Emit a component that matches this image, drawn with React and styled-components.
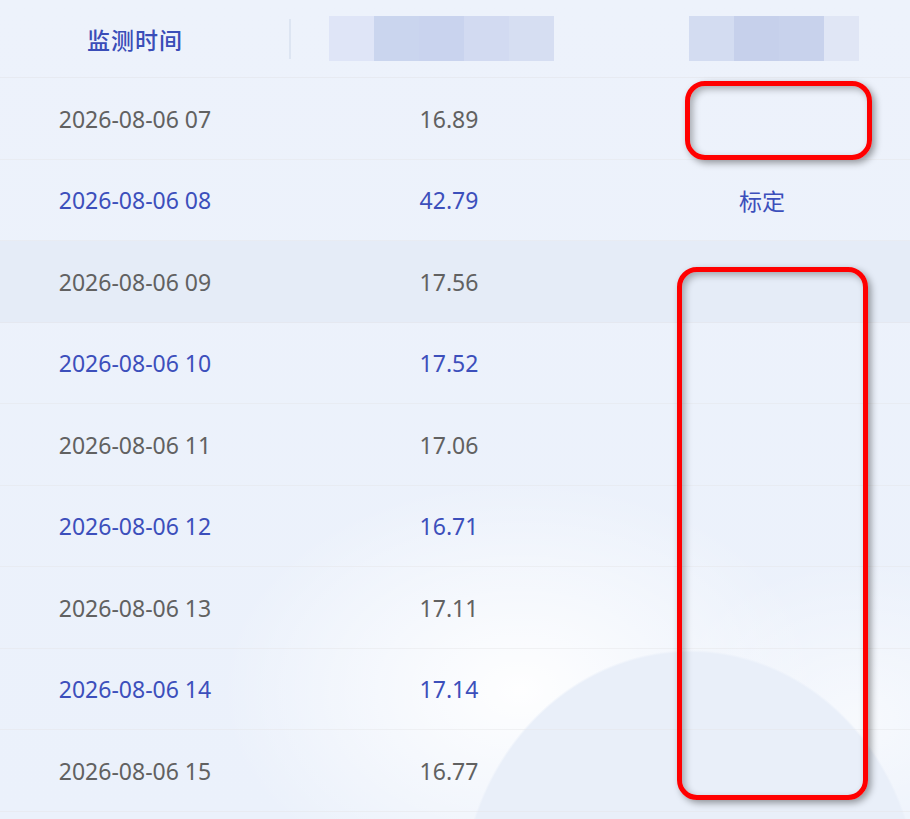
import React from 'react';
import styled, { createGlobalStyle } from 'styled-components';

const GlobalStyle = createGlobalStyle`
  html, body {
    margin: 0;
    padding: 0;
    background: #ebf1fb;
  }
  * {
    box-sizing: border-box;
  }
`;

const Page = styled.div`
  position: relative;
  width: 910px;
  height: 819px;
  overflow: hidden;
  font-family: "Noto Sans", "Noto Sans CJK SC", sans-serif;
  background:
    radial-gradient(ellipse 230px 255px at 690px 905px, #e9eff9 99%, rgba(233, 239, 249, 0) 100%),
    radial-gradient(ellipse 300px 210px at 520px 690px, rgba(255, 255, 255, 0.95), rgba(255, 255, 255, 0) 100%),
    radial-gradient(ellipse 200px 160px at 860px 720px, rgba(255, 255, 255, 0.6), rgba(255, 255, 255, 0) 100%),
    linear-gradient(180deg, #edf2fb 0%, #ebf1fb 100%);
`;

const Columns = `
  display: grid;
  grid-template-columns: 270px 358px 268px 1fr;
`;

const HeaderRow = styled.div`
  ${Columns}
  height: 78px;
  border-bottom: 1px solid rgba(226, 229, 235, 0.6);
`;

const HeaderCell = styled.div`
  display: flex;
  align-items: center;
  justify-content: ${(p) => (p.$start ? 'flex-start' : 'center')};
  padding-left: ${(p) => p.$pad || 0}px;
  font-size: 23px;
  font-weight: 500;
  color: #3a4db8;
  letter-spacing: 1px;
`;

const Divider = styled.span`
  width: 2px;
  height: 40px;
  background: #dde5f2;
  margin-right: 38px;
`;

const Blur = styled.div`
  display: flex;
  height: 45px;
`;

const BlurCell = styled.span`
  width: ${(p) => p.$w || 45}px;
  height: 100%;
  background: ${(p) => p.$c};
`;

const Row = styled.div`
  ${Columns}
  height: 81.5px;
  border-bottom: 1px solid rgba(228, 228, 230, 0.45);
  background: ${(p) => (p.$hover ? '#e5ecf7' : 'transparent')};
  color: ${(p) => (p.$alt ? '#3c4fbb' : '#616161')};
  font-size: 23px;
`;

const Cell = styled.div`
  display: flex;
  align-items: center;
  justify-content: center;
  padding-top: 1px;
`;

const Mark = styled.div`
  position: absolute;
  left: ${(p) => p.$x}px;
  top: ${(p) => p.$y}px;
  width: ${(p) => p.$w}px;
  height: ${(p) => p.$h}px;
  border: 5px solid #ff0000;
  border-radius: 20px;
  box-shadow: 3px 3px 7px rgba(0, 0, 0, 0.38), inset 3px 3px 7px rgba(0, 0, 0, 0.3);
`;

const rows = [
  ['2026-08-06 07', '16.89', ''],
  ['2026-08-06 08', '42.79', '标定'],
  ['2026-08-06 09', '17.56', ''],
  ['2026-08-06 10', '17.52', ''],
  ['2026-08-06 11', '17.06', ''],
  ['2026-08-06 12', '16.71', ''],
  ['2026-08-06 13', '17.11', ''],
  ['2026-08-06 14', '17.14', ''],
  ['2026-08-06 15', '16.77', ''],
];

const blurA = ['#dfe5f7', '#cad5ee', '#c9d3ee', '#d2daf1', '#d6def2'];
const blurB = ['#d3dcf1', '#c6d0eb', '#c8d2ec', '#e0e6f5'];

export default function App() {
  return (
    <Page>
      <GlobalStyle />
      <HeaderRow>
        <HeaderCell>监测时间</HeaderCell>
        <HeaderCell $start $pad={19}>
          <Divider />
          <Blur>
            {blurA.map((c) => (
              <BlurCell key={c} $c={c} />
            ))}
          </Blur>
        </HeaderCell>
        <HeaderCell $start $pad={61}>
          <Blur>
            {blurB.map((c, i) => (
              <BlurCell key={c} $c={c} $w={i === 3 ? 35 : 45} />
            ))}
          </Blur>
        </HeaderCell>
        <HeaderCell />
      </HeaderRow>
      {rows.map((r, i) => (
        <Row key={r[0]} $alt={i % 2 === 1} $hover={i === 2}>
          <Cell>{r[0]}</Cell>
          <Cell>{r[1]}</Cell>
          <Cell>{r[2]}</Cell>
          <Cell />
        </Row>
      ))}
      <Mark $x={685} $y={81} $w={187} $h={79} />
      <Mark $x={677} $y={267} $w={191} $h={533} />
    </Page>
  );
}
